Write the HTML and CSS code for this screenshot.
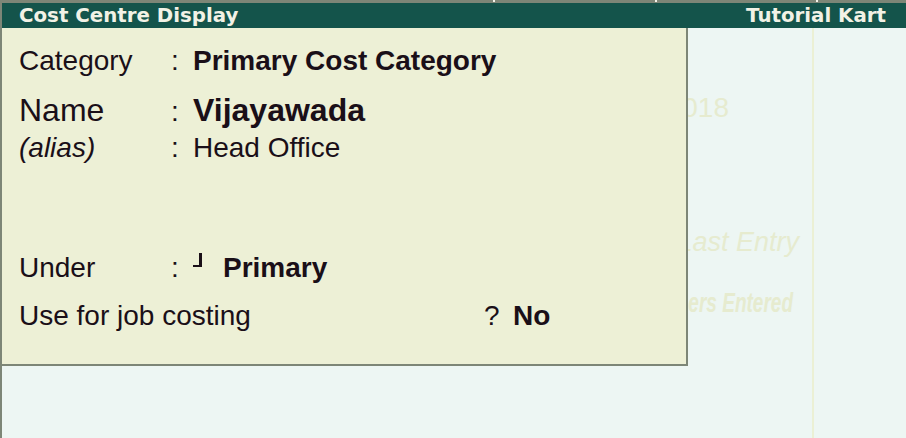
FILE: index.html
```html
<!DOCTYPE html>
<html>
<head>
<meta charset="utf-8">
<title>Cost Centre Display</title>
<link rel="stylesheet" href="styles.css">
</head>
<body>
<div class="screen">
  <div class="topstrip"></div>
  <div class="titlebar">
    <span class="title">Cost Centre Display</span>
    <span class="brand">Tutorial Kart</span>
  </div>
  <div class="main">
    <div class="backdrop">
      <div class="bg-under"></div>
      <div class="bg-col">
        <div class="ghost g1"><span>018</span></div>
        <div class="ghost g2"><span>Last Entry</span></div>
        <div class="ghost g3"><span>ers Entered</span></div>
      </div>
      <div class="bg-line"></div>
      <div class="bg-rest"></div>
    </div>
    <div class="panel">
      <div class="row r-cat">
        <span class="lbl">Category</span>
        <span class="colon">:</span>
        <span class="val bold">Primary Cost Category</span>
      </div>
      <div class="row r-name">
        <span class="lbl">Name</span>
        <span class="colon">:</span>
        <span class="val bold">Vijayawada</span>
      </div>
      <div class="row r-alias">
        <span class="lbl italic">(alias)</span>
        <span class="colon">:</span>
        <span class="val">Head Office</span>
      </div>
      <div class="row r-under">
        <span class="lbl">Under</span>
        <span class="colon">:</span>
        <span class="val"><span class="corner"></span><span class="bold">Primary</span></span>
      </div>
      <div class="row r-job">
        <span class="lbl-wide">Use for job costing</span>
        <span class="q">?</span>
        <span class="bold">No</span>
      </div>
    </div>
  </div>
</div>
</body>
</html>
```

FILE: styles.css
```css
html, body {
  margin: 0;
  padding: 0;
}
body {
  width: 906px;
  height: 438px;
  overflow: hidden;
  background: #edf6f3;
  font-family: "Liberation Sans", Arial, sans-serif;
}
.screen {
  width: 904px;
  height: 438px;
  border-left: 2px solid #7d8677;
  display: grid;
  grid-template-rows: 3px 25px 1fr;
}
.topstrip {
  background:
    linear-gradient(#f4f4ea, #f4f4ea) 491px 0 / 2px 2px no-repeat,
    linear-gradient(#f4f4ea, #f4f4ea) 653px 0 / 2px 2px no-repeat,
    linear-gradient(#f4f4ea, #f4f4ea) 814px 0 / 2px 2px no-repeat,
    #7d8677;
}
.titlebar {
  background: #14544b;
  display: flex;
  justify-content: space-between;
  align-items: center;
  padding: 0 20px 0 17px;
  font-family: "DejaVu Sans", Verdana, sans-serif;
  font-weight: bold;
  font-size: 19.8px;
  line-height: 25px;
  color: #f2f2e6;
}
.main {
  position: relative;
  background: #edf6f3;
}
.backdrop {
  display: flex;
  height: 100%;
}
.bg-under {
  width: 686px;
}
.bg-col {
  width: 124px;
  overflow: hidden;
  display: flex;
  flex-direction: column;
  font-size: 28px;
  color: #e6ebcf;
}
.bg-line {
  width: 2px;
  background: #ebf0d4;
}
.bg-rest {
  flex: 1;
}
.ghost {
  display: flex;
  justify-content: flex-end;
  line-height: 36px;
  white-space: nowrap;
}
.ghost span {
  flex: none;
}
.g1 {
  margin-top: 62px;
  padding-right: 83px;
}
.g2 {
  margin-top: 98px;
  padding-right: 13px;
  font-style: italic;
  font-size: 27px;
}
.g3 {
  margin-top: 25px;
  padding-right: 19px;
  font-style: italic;
  font-weight: bold;
}
.g3 span {
  display: inline-block;
  transform: scaleX(0.68);
  transform-origin: right center;
}
.panel {
  position: absolute;
  top: 0;
  left: 0;
  width: 667px;
  height: 321px;
  background: #edf0d6;
  border-right: 2px solid #7d8677;
  border-bottom: 2px solid #7d8677;
  padding: 15px 0 0 17px;
  color: #1a0f18;
  font-size: 28px;
}
.row {
  display: flex;
  align-items: baseline;
  line-height: 36px;
  white-space: nowrap;
}
.lbl {
  width: 152px;
}
.colon {
  width: 22px;
}
.bold {
  font-weight: bold;
}
.italic {
  font-style: italic;
}
.r-name {
  margin-top: 12px;
  font-size: 32px;
  line-height: 38px;
}
.r-name .colon {
  font-size: 28px;
}
.r-alias {
  margin-top: -1px;
}
.r-under {
  margin-top: 84px;
}
.r-job {
  margin-top: 12px;
}
.corner {
  display: inline-block;
  width: 6px;
  height: 12px;
  border-right: 3px solid #1a0f18;
  border-bottom: 2px solid #1a0f18;
  margin-right: 21px;
  vertical-align: 10px;
}
.lbl-wide {
  width: 465px;
}
.q {
  width: 29px;
}
```
